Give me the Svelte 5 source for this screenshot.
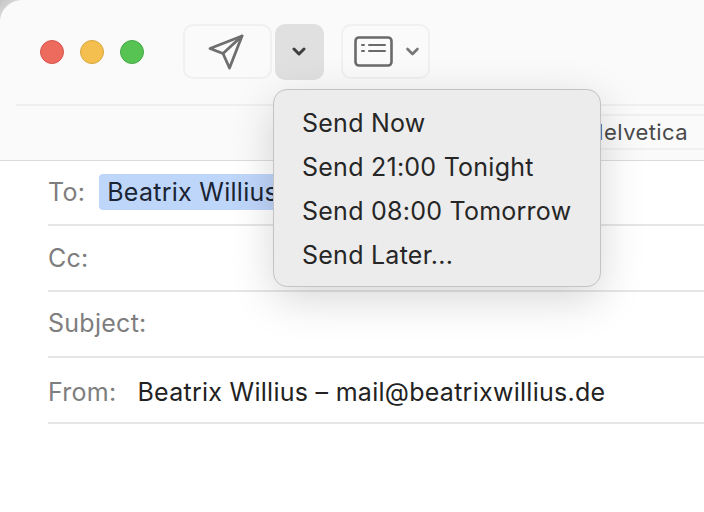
<script>
  const menuItems = ['Send Now', 'Send 21:00 Tonight', 'Send 08:00 Tomorrow', 'Send Later...'];
</script>

<div class="window">
  <header class="toolbar">
    <div class="top">
      <div class="lights">
        <span class="light red"></span>
        <span class="light yellow"></span>
        <span class="light green"></span>
      </div>
      <button class="tool send" aria-label="Send">
        <svg width="38" height="38" viewBox="0 0 38 38" fill="none" stroke="#6e6e6e" stroke-width="2.8" stroke-linejoin="round" stroke-linecap="round">
          <path d="M35 3 3 15.500 16 20.500 22.500 35Z" />
          <path d="M35 3 16 20.500" />
        </svg>
      </button>
      <button class="tool more" aria-label="Send options">
        <svg width="14" height="10" viewBox="0 0 14 10" fill="none" stroke="#3f3f3f" stroke-width="3" stroke-linecap="round" stroke-linejoin="round">
          <path d="M2 2 7 7 12 2" />
        </svg>
      </button>
      <button class="tool header-fields" aria-label="Header fields">
        <svg width="39" height="31" viewBox="0 0 39 31" fill="none" stroke="#6a6a6a" stroke-linecap="round">
          <rect x="1.500" y="1.500" width="36" height="28" rx="3.500" stroke-width="2.600" />
          <path d="M8 9h2M15 9h16M8 15h2M15 15h16" stroke-width="2" />
        </svg>
        <svg width="15" height="10" viewBox="0 0 14 10" fill="none" stroke="#777" stroke-width="2.600" stroke-linecap="round" stroke-linejoin="round">
          <path d="M2 2 7 7 12 2" />
        </svg>
      </button>
    </div>
    <div class="format">
      <div class="font-box">Helvetica</div>
    </div>
  </header>

  <section class="fields">
    <div class="row first">
      <span class="label">To:</span>
      <span class="chip">Beatrix Willius</span>
    </div>
    <div class="row"><span class="label">Cc:</span></div>
    <div class="row subject"><span class="label">Subject:</span></div>
    <div class="row last">
      <span class="label">From:</span>
      <span class="from">Beatrix Willius – mail@beatrixwillius.de</span>
    </div>
  </section>

  <ul class="menu">
    {#each menuItems as item}
      <li>{item}</li>
    {/each}
  </ul>
</div>

<style>
  :global(body) {
    margin: 0;
    background: #fff;
  }

  .window {
    position: relative;
    width: 704px;
    height: 512px;
    overflow: hidden;
    background: #fff;
    font-family: Inter, "Liberation Sans", sans-serif;
  }

  .window::before {
    content: '';
    position: absolute;
    left: 0;
    top: 0;
    width: 26px;
    height: 26px;
    background: linear-gradient(135deg, #c4c4c4, #e8e8e8 60%);
  }

  .toolbar {
    position: relative;
    height: 160px;
    background: #fafafa;
    border-bottom: 1px solid #dcdcdf;
    border-top-left-radius: 22px;
  }

  .top {
    display: flex;
    align-items: flex-start;
    height: 106px;
    margin-left: 16px;
    padding: 24px 0 0 24px;
    box-sizing: border-box;
    border-bottom: 2px solid #efefef;
  }

  .lights {
    display: flex;
    gap: 16px;
    margin-top: 16px;
    margin-right: 39px;
  }

  .light {
    width: 24px;
    height: 24px;
    border-radius: 50%;
    box-sizing: border-box;
    border: 1px solid transparent;
  }

  .red {
    background: #ec6a5e;
    border-color: #d6574c;
  }

  .yellow {
    background: #f4bf4f;
    border-color: #d9a63f;
  }

  .green {
    background: #57c353;
    border-color: #48a945;
  }

  .tool {
    display: flex;
    align-items: center;
    justify-content: center;
    height: 55px;
    padding: 0;
    box-sizing: border-box;
    background: #fafafa;
    border: 2px solid #f0f0f0;
    border-radius: 10px;
  }

  .send {
    width: 89px;
    padding-right: 3px;
  }

  .more {
    width: 49px;
    height: 56px;
    margin-left: 3px;
    padding-right: 2px;
    background: #e0e0e0;
    border: none;
  }

  .header-fields {
    width: 89px;
    margin-left: 17px;
    gap: 12px;
    padding-left: 3px;
  }

  .format {
    display: flex;
    justify-content: flex-end;
    padding-top: 8px;
  }

  .font-box {
    width: 200px;
    height: 36px;
    box-sizing: border-box;
    padding-right: 16px;
    display: flex;
    align-items: center;
    justify-content: flex-end;
    font-size: 22px;
    letter-spacing: 0.4px;
    color: #4a4a4a;
    border-top: 2px solid #f0f0f0;
    border-bottom: 2px solid #f0f0f0;
  }

  .fields {
    padding-left: 48px;
  }

  .row {
    display: flex;
    align-items: center;
    height: 66px;
    box-sizing: border-box;
    border-bottom: 2px solid #e6e6e6;
    font-size: 25px;
    letter-spacing: 0.27px;
  }

  .row.first {
    height: 65px;
    padding-bottom: 2px;
  }

  .row.subject {
    padding-bottom: 2px;
  }

  .row.last {
    padding-top: 3px;
  }

  .label {
    color: #7e7e7e;
  }

  .chip {
    margin-left: 14px;
    padding: 0 8px;
    height: 36px;
    line-height: 36px;
    border-radius: 4px;
    background: #bfd6fb;
    color: #1a2433;
    white-space: nowrap;
  }

  .from {
    margin-left: 21px;
    color: #222;
    white-space: nowrap;
  }

  .menu {
    position: absolute;
    left: 273px;
    top: 89px;
    width: 328px;
    height: 198px;
    margin: 0;
    padding: 11px 0 0 28px;
    box-sizing: border-box;
    list-style: none;
    background: #ececec;
    border: 1px solid #c3c3c3;
    border-radius: 14px;
    box-shadow: 0 12px 44px rgba(0, 0, 0, 0.16);
  }

  .menu li {
    height: 44px;
    line-height: 44px;
    font-size: 25px;
    letter-spacing: 0.25px;
    color: #262626;
    white-space: nowrap;
  }
</style>
